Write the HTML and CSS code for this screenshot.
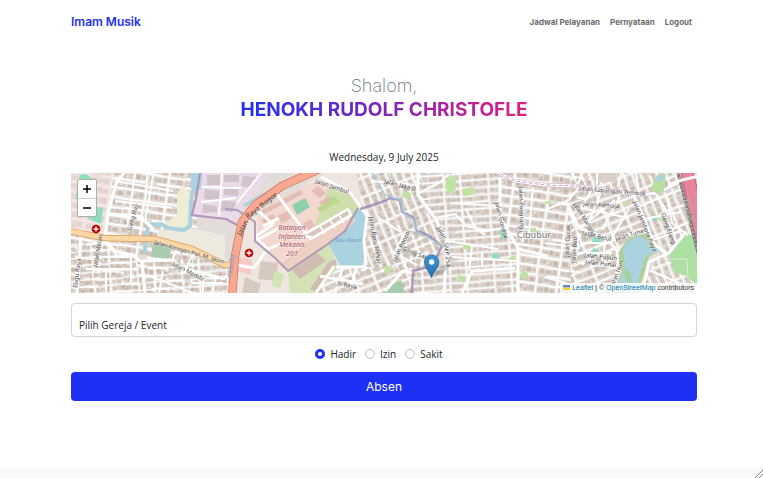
FILE: index.html
```html
<!DOCTYPE html>
<html lang="id">
<head>
<meta charset="utf-8">
<meta name="viewport" content="width=device-width, initial-scale=1">
<title>Imam Musik</title>
<link rel="stylesheet" href="styles.css">
</head>
<body>
<header class="navbar">
  <a class="brand" href="#">Imam Musik</a>
  <nav class="links">
    <a href="#">Jadwal Pelayanan</a>
    <a href="#">Pernyataan</a>
    <a href="#">Logout</a>
  </nav>
</header>
<main class="content">
  <h1 class="greeting">
    <span class="hello">Shalom,</span>
    <span class="name">HENOKH RUDOLF CHRISTOFLE</span>
  </h1>
  <p class="date">Wednesday, 9 July 2025</p>
  <section class="map" aria-label="Peta">
    <svg class="tiles" viewBox="0 0 626 120" preserveAspectRatio="xMidYMid slice" aria-hidden="true">
      <defs>
        <g id="block">
          <path fill="#d0c2b7" d="M1 2h5v4h-5zM7 1h4v5h-4zM12 2h6v4h-6zM22 1h4v6h-4zM27 2h6v3h-6zM34 1h5v5h-5zM43 2h5v4h-5zM49 1h6v5h-6zM1 10h6v4h-6zM8 11h4v5h-4zM13 10h5v5h-5zM22 11h6v4h-6zM29 10h4v5h-4zM34 11h5v4h-5zM43 10h4v6h-4zM48 11h7v4h-7zM2 20h4v5h-4zM7 21h6v3h-6zM14 20h4v6h-4zM22 20h5v4h-5zM28 21h5v4h-5zM34 20h5v6h-5zM43 20h6v5h-6zM50 21h5v4h-5zM1 30h6v4h-6zM8 29h5v5h-5zM14 30h4v3h-4zM22 29h4v5h-4zM27 30h7v4h-7zM35 29h4v5h-4zM43 30h5v3h-5zM49 29h6v5h-6z"/>
          <path fill="#c4b5a8" d="M3 3h3v3h-3zM14 2h3v3h-3zM29 10h3v4h-3zM44 20h3v3h-3zM35 21h3v3h-3zM9 30h3v3h-3zM50 11h3v3h-3zM23 31h3v2h-3z"/>
          <path fill="#e9e2cf" d="M8 11h2v2h-2zM28 22h3v2h-3zM50 3h3v2h-3zM2 31h3v2h-3z"/>
          <path fill="none" stroke="#fff" stroke-width="1.8" d="M0 8h20M20 8l21 1M41 8h16M0 18h41M41 17l16 1M0 27h20l21 1h16M20 0v18M19 18v19M41 0v37M0 36h20M30 36h27"/>
        </g>
        <pattern id="p1" width="57" height="37" patternUnits="userSpaceOnUse" patternTransform="rotate(8)"><use href="#block"/></pattern>
        <pattern id="p2" width="57" height="37" patternUnits="userSpaceOnUse" patternTransform="rotate(-22) scale(.9)"><use href="#block"/></pattern>
        <pattern id="p3" width="57" height="37" patternUnits="userSpaceOnUse" patternTransform="rotate(68) scale(.85)"><use href="#block"/></pattern>
        <pattern id="p4" width="57" height="37" patternUnits="userSpaceOnUse" patternTransform="rotate(-4) scale(.78)"><use href="#block"/></pattern>
        <linearGradient id="pin" x2="0" y2="1"><stop stop-color="#3f97d5"/><stop offset="1" stop-color="#246fb0"/></linearGradient>
      </defs>
      <rect width="626" height="120" fill="#e2ddd9"/>
      <!-- districts -->
      <path fill="url(#p1)" d="M0 0h126v120H0z"/>
      <path fill="url(#p4)" d="M0 66l60 14 20 40H0zM76 86h90v34H76z"/>
      <path fill="url(#p3)" d="M280 0h70l12 45 14 28-14 20-80 10-20-60z"/>
      <path fill="url(#p2)" d="M260 94h60l25-40 20 10-24 56h-95z"/>
      <path fill="url(#p4)" d="M347 0h83v45l17 30v45h-73V68l-25-45zM341 92h40v28h-40z"/>
      <path fill="url(#p1)" d="M430 0h90l-15 120h-58V75l-17-30z"/>
      <path fill="url(#p2)" d="M497 14l70 8 15 42-30 8-8 48h-44z"/>
      <path fill="url(#p3)" d="M500 0h108l18 68-30 12-16-15-18-44-62-10zM590 78l36 26v16h-60z"/>

      <!-- western quarter -->
      <path fill="#f0dfdb" d="M0 0h42l-8 64-34-7z" opacity=".65"/>
      <path fill="#8fdfbe" d="M9 2l6-1 6 4-5 20-12 1zM20 33l12 2-2 16-13-5z"/>
      <path fill="#eee9df" d="M88 57l34-1 32 6v26l-34-13-36-9z"/>
      <path fill="#edeed5" d="M112 12l7 8-1 33-16 3-9-5 13-9V22z"/>
      <path fill="#ebdbe8" d="M129 0h72l-27 32-10 20-10-7-33-3 6-17z"/>
      <path fill="#d1c3ca" d="M136 2h13v10h-13zM153 2h15v7h-15zM134 16l16 2-2 10-15-2zM153 13l15 1-1 9-14-1zM172 3l14 1-7 11-9-2zM152 27l13 2-4 10-12-1zM132 31l14 2v6l-15 1z"/>
      <path fill="none" stroke="#fff" stroke-width="1.8" d="M151 0l-3 44M130 14l40 1M190 0l-24 30M130 29l35-4"/>
      <path fill="#a9cbae" d="M82 70l18 3-1 13-19-2z"/>
      <g fill="none" stroke="#aad3df" stroke-linecap="round" stroke-linejoin="round">
        <path stroke-width="11" d="M126-5l-1 18"/>
        <path stroke-width="4" d="M123 15l-3 12-1 26-6 4-16-2-7-4-12 1-3 10-1 16"/>
        <path stroke-width="3" d="M161 120l2-47 7-28M174 32l18-10 42-21"/>
      </g>
      <path fill="none" stroke="#b394bb" stroke-width="2.2" d="M129 0l-4 25-4 17 16 2 18 2 11 6"/>
      <g fill="none" stroke="#fff" stroke-width="3.2" stroke-linejoin="round">
        <path d="M54-1L45 10l-8 31-3 26 10 11 17 4 10 7 3 31M71 88l30-1 10 8 43 11M10 62L6 120M37 41l32 2 13 13"/>
        <path stroke-width="2" d="M44 8l58 10M64 0l-8 55M82 3l-8 46M44 28l57 7M15 72l18-3 13 13M15 96h50M22 84h38v28M35 96v24M92 98l-4 22M76 102l46 18M106 74l-5 14M123 78l-8 18M132 101v19M145 104l-4 16M120 110h32"/>
      </g>
      <path fill="none" stroke="#d79c54" stroke-width="6.4" d="M-2 58l36 7 50 1 37 10 33 16h13"/>
      <path fill="none" stroke="#fcd6a4" stroke-width="5" d="M-2 58l36 7 50 1 37 10 33 16h13"/>

      <!-- barracks, field and lake -->
      <path fill="#eee6df" d="M172 50l82-50h32l5 35-24 58-24 27h-77z"/>
      <path fill="#f2d8cf" d="M187 35l60-28 28 16-28 44-35 25-25-24z"/>
      <path fill="#cfdeac" d="M258 13l27 11 3 13-8 9-43 22 10-24z"/>
      <path fill="#d3e3b5" d="M217 98l41-27 9 24-23 25h-25z"/>
      <path fill="#ddb6ad" d="M191 37l18-9 2 4-18 9zM212 26l17-9 3 4-17 9zM240 18l7-5 8 7-6 5zM206 43l10-5 5 7-10 5zM248 29l11-6 3 4-11 6zM232 51l7-5 5 6-6 5zM191 46l11-5 3 4-12 6z" opacity=".75"/>
      <path fill="#8fcfab" d="M221 32l13-7 5 9-13 8z"/>
      <path fill="#b9d98c" d="M246 35l16-8 2 4-15 8zM261 23l8 5-3 3-8-5z"/>
      <path fill="#edd1c5" stroke="#dcb3ad" stroke-width=".7" d="M211 92l30-25 40-23 3 9-66 44z"/>
      <path fill="#d1bcb2" d="M221 97l25-17 9 8-26 18zM257 90l7-4 2 5-22 27-5-2z"/>
      <path fill="#d7c8c0" d="M190 88l17 2-2 18-18-2zM174 104l16 7-3 9h-16z"/>
      <path fill="#f7cac5" d="M168 84l13 3-1 15-13-4z"/>
      <path fill="#cfe5b4" d="M203 98l10 3-4 14-8-2z"/>
      <path fill="#aad3df" d="M282 40l10-6 5 10-5 24v24l-9 3-14-3-8-14-4-8 17-12 10-9z"/>
      <g fill="none" stroke="#fff" stroke-width="2.8" stroke-linejoin="round">
        <path d="M205 20l35 47M184 35l18 16-18 13 13 12 15-6M192 53l16-8M188 66l22-12M166 92l17 3 11-16M250 4l28 14 18 25-3 24 2 25M265 94h30M249 103l43 8M245 120l18-27M272 94l-8 26M285 94l-5 22"/>
      </g>
      <path fill="#d6c8bd" stroke="#fff" stroke-width="2.4" stroke-linejoin="round" d="M242 65l35-20 3-3-3-6-36 21-9 5z"/>
      <path fill="none" stroke="#fff" stroke-width="1.5" d="M239 66l40-24M249 53l5 8M259 47l5 8M268 42l5 8"/>
      <path fill="none" stroke="#a98fb4" stroke-width="2" opacity=".85" d="M154 36l12 1 18 12v19l20 17 13 13 40-27 17-13 13-23"/>
      <path fill="none" stroke="#d6705e" stroke-width="8.4" d="M255-7l-44 20-27 19-13 17-7 34-3 41"/>
      <path fill="none" stroke="#f9a892" stroke-width="7" d="M255-7l-44 20-27 19-13 17-7 34-3 41"/>

      <!-- centre -->
      <g fill="#bfe3a0"><path d="M376 5l10-2-2 14-6 3-4-6z"/><path d="M391 16l12-2-1 8-9 1zM392 70l8 3-2 5-6-3zM387 102l8 2v6l-7-2zM450 97l7 3-1 6-7-1zM439 84l7-2-2 5-8 1zM315 92l6 2-3 8-5-3zM332 18l8 2-2 6-7-2zM457 55h8v4h-8z"/></g>
      <path fill="#8bdcc0" d="M428 56l5 1 3 10-6-2zM421 80l8 2-2 5-6-2z"/>
      <path fill="#a5cdab" d="M315 114l15-7 4 13h-20z"/>
      <path fill="#d6bfda" d="M446 53l7 1-1 6-6-2z"/>
      <path fill="none" stroke="#9e8ab5" stroke-width="2.4" opacity=".85" d="M289 36l10-3 15-5 5-3 10 2 2 12 11 5 4 14 11 4 14 11-10 20-19 5-1 22"/>
      <path fill="none" stroke="#9ecbdd" stroke-width="1.4" d="M300-2l14 24 15 5 3 13 10 6 5 13 25 14"/>
      <g fill="none" stroke="#fff" stroke-width="3.2" stroke-linejoin="round">
        <path d="M347-2v24l17 23 12 23-3 52M429 4v41l18 30v45M447 76l30 7M391 120l10-22 43-3M314 118l18-20 9 2"/>
        <path stroke-width="2" d="M347 21l22-12 9-8M364 45l20-4 11 12 19 4M395 36l10 20 9 6M377 68l50 8M398 98l3-25M411 94V80M432 55l-22 4M452 17v52M300 8l45 4M308 45l22 14M320 78l26 14M381 84l66 4M380 30l48 3M462 14l-4 46M334 60l-9 17"/>
      </g>
      <g fill="none" stroke-linejoin="round">
        <path stroke="#d1aac5" stroke-width="4" d="M424-2l20 10 30 4 33 1 60 9 20-2 24-12 16-4"/>
        <path stroke="#fff" stroke-width="2.8" d="M424-2l20 10 30 4 33 1 60 9 20-2 24-12 16-4"/>
        <path stroke="#c9a2ba" stroke-width="1" stroke-dasharray="4 2" d="M424-2l20 10 30 4 33 1 60 9"/>
      </g>

      <!-- east -->
      <path fill="#d9d0c9" d="M526 0h20v9h-20z"/>
      <path fill="#b6dfa0" d="M580 15l6-13 9-1-2 17-7 4z"/>
      <path fill="#aad3df" d="M586 3l7-1-1 6-6 1z"/>
      <path fill="#8bdcc0" d="M522 64l9 1-1 5-9-1zM522 75l5 2-3 6-3-2zM582 42l5 1-2 5-4-2z"/>
      <path fill="#c4e6a9" d="M474 28h6v3h-6zM552 28l5 1-2 4-4-1zM587 41l4 1-1 6-4-1z"/>
      <path fill="#b0cf98" d="M546 82l9-14 14-8h8l3 8 11 8-13 8-6 20-6 16h-23l8-22z"/>
      <path fill="#aad3df" d="M552 77l3-7 12-7 8 3 4 7 11 4-15 6-5 14-3 14-4 9h-20l7-14 4-14z"/>
      <path fill="#a7d0a0" d="M554 95l5 4 2 9-4 2-4-7z"/>
      <path fill="#aee0a4" d="M597 79l17-18 12 1v50l-11-9-12-4z"/>
      <g fill="none" stroke="#fff" stroke-width="3" stroke-linejoin="round">
        <path d="M562 20l12 28 9 23 13 10M496 30l12 25 28 10 10 13 1 15-5 27M596 81l-18 8-7 31M597 81l18-22"/>
        <path stroke-width="2" d="M474 37l24-10 10-13M509 55l35-28M538 66l23-4 15-3M520 18l-10 17 48 10M530 19l-14 34M549 23l-18 34M558 36l-18 30M508 60l-4 30 42 4M510 70h30M507 80h34M535 64l-4 26M584 20l13 20M569 33l42-17M573 46l37-7M596 24l5 26 16 12M474 70l35 5M474 104l30 9M578 68l32-10M580 98l31 13M511 0l-4 11M526 0v12M550 0l-3 14M565 0l3 18"/>
        <path stroke-width="1" stroke="#dfe9d8" d="M597 86h19l1 20"/>
      </g>
      <path fill="#e5869d" d="M610 0h12l6 20v60l-10-42z"/>
      <path fill="none" stroke="#d55e7d" stroke-width="1.2" d="M622-1l6 23M610 0l16 72"/>
      <path fill="none" stroke="#777" stroke-width="3" d="M607 0l9 35 11 45"/>
      <path fill="none" stroke="#bbb" stroke-width="1.4" stroke-dasharray="2 2" d="M607 0l9 35 11 45"/>
      <path fill="none" stroke="#fff" stroke-width="3" d="M597 12l14-5 17-4"/>

      <!-- labels -->
      <g class="streets">
        <text transform="translate(83 71) rotate(16)">Jalan Komjen Pol. M. Jasin</text>
        <text class="main" transform="translate(170 63) rotate(-62)">Jalan</text>
        <text class="main" transform="translate(177 46) rotate(-38)">Raya Bogor</text>
        <text transform="translate(101 92) rotate(28)">Jalan Mendir</text>
        <text transform="translate(26 94) rotate(-80)">Jalan Melati</text>
        <text transform="translate(6 115) rotate(-82)">Lugu Raya</text>
        <text transform="translate(60 58) rotate(-74)">Gang Haji</text>
        <text transform="translate(244 10) rotate(18)">Jalan Jambul</text>
        <text transform="translate(298 44) rotate(80)">Jalan Baru Mekar</text>
        <text transform="translate(313 10) rotate(15)">Jalan Jaka II</text>
        <text transform="translate(366 55) rotate(62)">Jalan</text>
        <text transform="translate(373 70) rotate(84)">SMP 251</text>
        <text transform="translate(325 89) rotate(-65)">Jalan Poncol</text>
        <text transform="translate(331 77) rotate(22)">Gang Sawo</text>
        <text transform="translate(424 30) rotate(76)">Jalan Gondok</text>
        <text transform="translate(448 14) rotate(88)">Jalan Pangrango</text>
        <text transform="translate(508 17) rotate(5)">Jalan Lapangan Tembak</text>
        <text transform="translate(512 33) rotate(3)">Jalan Kemaja</text>
        <text transform="translate(502 31) rotate(58)">Jalan Mangga</text>
        <text transform="translate(562 29) rotate(68)">Jalan Jambore Raya</text>
        <text transform="translate(590 41) rotate(70)">Gang Elang</text>
        <text transform="translate(511 62) rotate(12)">Jalan Belut</text>
        <text transform="translate(545 68) rotate(-17)">Jalan Tuna</text>
        <text transform="translate(498 84) rotate(-88)">Jalan Cucak</text>
        <text transform="translate(505 90) rotate(-88)">Jalan Beo</text>
        <text transform="translate(513 84) rotate(6)">Jalan Puyuh</text>
        <text transform="translate(514 91) rotate(6)">Jalan Punai</text>
        <text transform="translate(543 114) rotate(-70)">Jalan Nuri</text>
        <text transform="translate(613 26) rotate(76)">Jalan Tol</text>
        <text transform="translate(266 112) rotate(12)">Jl. Raya</text>
      </g>
      <g class="base">
        <text x="221" y="57">Batalyon</text><text x="221" y="66">Infanteri</text><text x="221" y="74">Mekanis</text><text x="221" y="83">201</text>
      </g>
      <text class="water" x="277" y="69">Situ Rawa</text>
      <text class="water" transform="translate(162 93) rotate(-82)">Ciliwung</text>
      <text class="town" x="463" y="65">Cibubur</text>
      <g fill="#bf0000"><circle cx="25" cy="56" r="4.3"/><circle cx="178" cy="80" r="4.3"/></g>
      <path stroke="#fff" stroke-width="1.3" d="M22.500 56h5M25 53.500v5M175.500 80h5M178 77.500v5"/>
      <!-- location pin -->
      <path fill="#333" opacity=".25" d="M361 105l5-8 10-7 4 3-8 7z"/>
      <path fill="url(#pin)" stroke="#2e6c97" stroke-width=".8" d="M360.500 105c-1-5-7-10-7-16a7.200 7.200 0 0 1 14.400 0c0 6-6.400 11-7.400 16z"/>
      <circle cx="360.700" cy="89" r="2.700" fill="#fff"/>
    </svg>
    <div class="zoom">
      <button type="button" aria-label="Zoom in"><svg viewBox="0 0 10 10"><path d="M1 5h8M5 1v8"/></svg></button>
      <button type="button" aria-label="Zoom out"><svg viewBox="0 0 10 10"><path d="M1 5h8"/></svg></button>
    </div>
    <div class="attribution">
      <svg class="flag" viewBox="0 0 12 8" aria-hidden="true"><path fill="#4C7BE1" d="M0 0h12v4H0z"/><path fill="#FFD500" d="M0 4h12v3H0z"/><path fill="#E0BC00" d="M0 7h12v1H0z"/></svg>
      <a href="#">Leaflet</a> | © <a href="#">OpenStreetMap</a> contributors
    </div>
  </section>
  <form class="form">
    <select class="event" aria-label="Pilih Gereja / Event">
      <option>Pilih Gereja / Event</option>
    </select>
    <div class="choices">
      <label><input type="radio" name="status" checked>Hadir</label>
      <label><input type="radio" name="status">Izin</label>
      <label><input type="radio" name="status">Sakit</label>
    </div>
    <button class="submit" type="button">Absen</button>
  </form>
</main>
<footer class="footer">
  <svg class="grip" viewBox="0 0 8 8" aria-hidden="true"><path d="M0 8L8 0M4 8l4-4"/></svg>
</footer>
</body>
</html>
```
FILE: styles.css
```css
* {
  box-sizing: border-box;
}

body {
  margin: 0;
  min-height: 100vh;
  display: flex;
  flex-direction: column;
  background: #fff;
  color: #212529;
  font: 10px/16px "Open Sans", "Liberation Sans", sans-serif;
}

.navbar,
.content {
  padding: 0 66px 0 71px;
}

.navbar {
  display: flex;
  align-items: center;
  justify-content: space-between;
  height: 44px;
  font-family: Inter, sans-serif;
}

.brand {
  color: #1e30f3;
  font-size: 12px;
  font-weight: 600;
  text-decoration: none;
}

.links {
  display: flex;
  gap: 10px;
  padding-right: 5px;
}

.links a {
  color: #6b6b6b;
  font-size: 8px;
  font-weight: 700;
  text-decoration: none;
}

.content {
  flex: 1;
  display: flex;
  flex-direction: column;
  padding-top: 30px;
}

.greeting {
  display: flex;
  flex-direction: column;
  align-items: center;
  margin: 0 0 27px;
  font-family: Inter, sans-serif;
  line-height: 24px;
}

.hello {
  color: #6c757d;
  font-size: 18px;
  font-weight: 200;
}

.name {
  font-size: 19px;
  font-weight: 700;
  color: transparent;
  background: linear-gradient(90deg, #1e30f3, #e21e80);
  background-clip: text;
  -webkit-background-clip: text;
}

.date {
  margin: 0 0 8px;
  text-align: center;
}

.map {
  position: relative;
  height: 120px;
  overflow: hidden;
  background: #ddd;
}

.tiles {
  display: block;
  width: 100%;
  height: 100%;
}

.streets {
  font: 6px "Noto Sans", sans-serif;
  fill: #444;
  stroke: #fff;
  stroke-width: 1px;
  stroke-opacity: 0.5;
  paint-order: stroke;
}

.main {
  font-size: 7px;
  stroke: none;
}

.base {
  font: italic 7px "Noto Sans", sans-serif;
  fill: #a3485c;
  stroke: #fff;
  stroke-width: 1px;
  stroke-opacity: 0.5;
  paint-order: stroke;
  text-anchor: middle;
}

.water {
  font: italic 6px "Noto Sans", sans-serif;
  fill: #6b9fd0;
  text-anchor: middle;
}

.town {
  font: 9px "Noto Sans", sans-serif;
  fill: #777;
  stroke: #fff;
  stroke-width: 2px;
  stroke-opacity: 0.7;
  paint-order: stroke;
  text-anchor: middle;
}

.zoom {
  position: absolute;
  top: 6px;
  left: 6px;
  display: flex;
  flex-direction: column;
  border: 1px solid #b3aeaa;
  border-radius: 2px;
  overflow: hidden;
}

.zoom button {
  display: grid;
  place-items: center;
  width: 18px;
  height: 18px;
  padding: 0;
  border: 0;
  background: #fff;
}

.zoom button + button {
  border-top: 1px solid #ccc;
}

.zoom svg {
  width: 10px;
  height: 10px;
  stroke: #000;
  stroke-width: 1.5;
}

.attribution {
  position: absolute;
  right: 0;
  bottom: 0;
  padding: 0 3px;
  background: rgba(255, 255, 255, 0.8);
  color: #333;
  font: 7px/10px "Liberation Sans", sans-serif;
}

.attribution a {
  color: #0078a8;
  text-decoration: none;
}

.flag {
  width: 7px;
  height: 5px;
}

.form {
  display: flex;
  flex-direction: column;
  margin-top: 10px;
}

.event {
  appearance: none;
  width: 100%;
  height: 34px;
  padding: 10px 7px 0;
  border: 1px solid #ced4da;
  border-radius: 4px;
  background: #fff;
  color: #212529;
  font: inherit;
}

.choices {
  display: flex;
  justify-content: center;
  gap: 9px;
  margin: 9px 0 10px;
  padding-right: 10px;
}

.choices label {
  display: flex;
  align-items: center;
  gap: 5px;
}

.choices input {
  appearance: none;
  width: 10px;
  height: 10px;
  margin: 0;
  border: 1px solid #bfbfbf;
  border-radius: 50%;
  background: #fff;
}

.choices input:checked {
  border: 3px solid #1e30f3;
}

.submit {
  height: 29px;
  padding: 0;
  border: 0;
  border-radius: 4px;
  background: #1e30f3;
  color: #fff;
  font: 12px/20px Inter, sans-serif;
}

.footer {
  display: flex;
  justify-content: flex-end;
  align-items: flex-end;
  height: 10px;
  background: #f8f9fa;
}

.grip {
  width: 8px;
  height: 8px;
  fill: none;
  stroke: #888;
  stroke-width: 1;
}
```
